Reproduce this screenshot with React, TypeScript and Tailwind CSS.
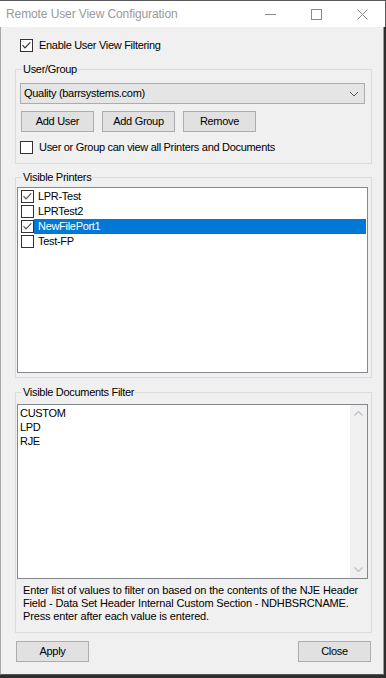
import React from "react";

const font = "font-['Liberation_Sans',Arial,sans-serif]";

function Box({ checked, light }: { checked?: boolean; light?: boolean }) {
  return (
    <span className="w-[13px] h-[13px] border border-[#333333] bg-white flex items-center justify-center shrink-0">
      {checked && (
        <svg width="11" height="11" viewBox="0 0 11 11">
          <path
            d="M1.5 5.2 L4 7.8 L9.3 2.4"
            stroke={light ? "#555555" : "#333333"}
            strokeWidth="1.2"
            fill="none"
          />
        </svg>
      )}
    </span>
  );
}

function Btn({ children }: { children: React.ReactNode }) {
  return (
    <button className="w-[73px] h-[21px] bg-[#e1e1e1] border border-[#adadad] text-[11px] tracking-[-0.3px] text-black flex items-center justify-center leading-none">
      {children}
    </button>
  );
}

function Group({
  label,
  className,
  children,
}: {
  label: string;
  className: string;
  children: React.ReactNode;
}) {
  return (
    <div className={`ml-[14px] w-[357px] border border-[#dcdcdc] flex flex-col ${className}`}>
      <span className="-mt-[7px] ml-[6px] self-start px-[1px] bg-[#f0f0f0] leading-[13px]">{label}</span>
      {children}
    </div>
  );
}

const printers = [
  { name: "LPR-Test", checked: true, sel: false },
  { name: "LPRTest2", checked: false, sel: false },
  { name: "NewFilePort1", checked: true, sel: true },
  { name: "Test-FP", checked: false, sel: false },
];

export default function App() {
  return (
    <div className={`w-[386px] h-[678px] bg-[#2e2e2e] flex flex-col overflow-hidden ${font} text-[11px] tracking-[-0.3px] text-black`}>
      {/* Title bar */}
      <div className="h-[27px] w-[386px] bg-white border-t border-r border-[#5a5a5a] flex items-center shrink-0">
        <span className="ml-[6px] text-[12px] tracking-[-0.1px] text-[#999999] flex-1">
          Remote User View Configuration
        </span>
        <div className="w-[46px] h-full flex items-center justify-center">
          <svg width="11" height="11" viewBox="0 0 11 11">
            <path d="M0 5.5 H11" stroke="#8a8a8a" strokeWidth="1" />
          </svg>
        </div>
        <div className="w-[46px] h-full flex items-center justify-center">
          <svg width="11" height="11" viewBox="0 0 11 11">
            <rect x="0.5" y="0.5" width="10" height="10" stroke="#8a8a8a" strokeWidth="1" fill="none" />
          </svg>
        </div>
        <div className="w-[46px] h-full flex items-center justify-center">
          <svg width="11" height="11" viewBox="0 0 11 11">
            <path d="M0.5 0.5 L10.5 10.5 M10.5 0.5 L0.5 10.5" stroke="#8a8a8a" strokeWidth="1" />
          </svg>
        </div>
      </div>

      {/* Body */}
      <div className="w-[384px] h-[648px] bg-[#f0f0f0] border-l border-r border-b border-l-[#a8a8a8] border-r-[#9a9a9a] border-b-[#555555] flex flex-col shrink-0">
        <div className="mt-[12px] ml-[19px] flex items-center h-[13px] gap-[6px]">
          <Box checked />
          <span className="leading-[13px]">Enable User View Filtering</span>
        </div>

        <Group label="User/Group" className="mt-[17px] pb-[9px]">
          <div className="mt-[7px] ml-[4px] w-[345px] h-[21px] bg-[#e5e5e5] border border-[#acacac] flex items-center pl-[3px] pr-[3px]">
            <span className="flex-1">Quality (barrsystems.com)</span>
            <svg width="10" height="6" viewBox="0 0 10 6" className="mr-[2px]">
              <path d="M1 1 L5 5 L9 1" stroke="#555555" strokeWidth="1" fill="none" />
            </svg>
          </div>
          <div className="mt-[7px] ml-[5px] flex gap-[8px]">
            <Btn>Add User</Btn>
            <Btn>Add Group</Btn>
            <Btn>Remove</Btn>
          </div>
          <div className="mt-[9px] ml-[4px] flex items-center h-[13px] gap-[6px]">
            <Box />
            <span className="leading-[13px]">User or Group can view all Printers and Documents</span>
          </div>
        </Group>

        <Group label="Visible Printers" className="mt-[13px] pb-[4px]">
          <div className="mt-[3px] ml-[1px] w-[351px] h-[186px] bg-white border border-[#828790] pt-[1px] flex flex-col">
            {printers.map((p) => (
              <div key={p.name} className="h-[15px] flex items-center pl-[3px] pr-[1px]">
                <Box checked={p.checked} light />
                <span
                  className={`flex-1 h-[15px] pl-[4px] leading-[15px] ${
                    p.sel ? "bg-[#0078d7] text-white" : ""
                  }`}
                >
                  {p.name}
                </span>
              </div>
            ))}
          </div>
        </Group>

        <Group label="Visible Documents Filter" className="mt-[14px] pb-[9px]">
          <div className="mt-[5px] ml-[1px] w-[351px] h-[175px] bg-white border border-[#828790] flex">
            <div className="flex-1 pl-[2px] pt-[1px] leading-[14px] flex flex-col">
              <span>CUSTOM</span>
              <span>LPD</span>
              <span>RJE</span>
            </div>
            <div className="w-[17px] h-full bg-[#f0f0f0] flex flex-col items-center justify-between py-[6px]">
              <svg width="9" height="5" viewBox="0 0 9 5">
                <path d="M0.5 4.5 L4.5 0.5 L8.5 4.5" stroke="#c0c0c0" strokeWidth="1.2" fill="none" />
              </svg>
              <svg width="9" height="5" viewBox="0 0 9 5">
                <path d="M0.5 0.5 L4.5 4.5 L8.5 0.5" stroke="#c0c0c0" strokeWidth="1.2" fill="none" />
              </svg>
            </div>
          </div>
          <p className="mt-[5px] ml-[7px] leading-[13px] tracking-[-0.15px] whitespace-nowrap">
            Enter list of values to filter on based on the contents of the NJE Header
            <br />
            Field - Data Set Header Internal Custom Section - NDHBSRCNAME.
            <br />
            Press enter after each value is entered.
          </p>
        </Group>

        <div className="mt-[8px] ml-[15px] w-[355px] flex justify-between">
          <Btn>Apply</Btn>
          <Btn>Close</Btn>
        </div>
      </div>
    </div>
  );
}
